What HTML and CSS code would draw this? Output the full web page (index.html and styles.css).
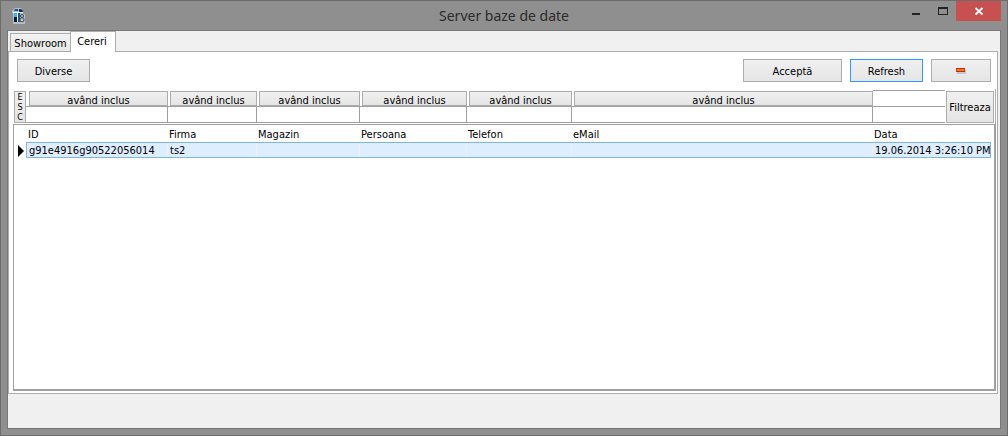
FILE: index.html
```html
<!DOCTYPE html>
<html lang="ro">
<head>
<meta charset="utf-8">
<title>Server baze de date</title>
<link rel="stylesheet" href="styles.css">
</head>
<body>
<div class="window">
  <header class="titlebar">
    <svg class="app-icon" viewBox="0 0 14 16" aria-hidden="true">
      <path d="M3 0h6l2 3v3h2v10H1V5H0V3z" fill="#b4c0c6"/>
      <path d="M3 1h3v2H2z" fill="#174f9c"/>
      <path d="M7 1h2l2 2v1H7z" fill="#0c2b58"/>
      <path d="M1 4h10v1H1z" fill="#f4fbff"/>
      <path d="M2 5h3v5H2z" fill="#3db4ea"/>
      <path d="M2 9h3v5H2z" fill="#06162e"/>
      <path d="M5 5h1v9H5z" fill="#eef6fa"/>
      <path d="M6 5h2v9H6z" fill="#1c5692"/>
      <circle cx="10" cy="8" r="1.500" fill="#c8cccf" stroke="#3c4246"/>
      <circle cx="10" cy="11.800" r="2" fill="#c8cccf" stroke="#3c4246"/>
    </svg>
    <h1 class="title">Server baze de date</h1>
    <div class="controls">
      <button class="control" aria-label="Minimize"><svg width="10" height="10" viewBox="0 0 10 10"><path d="M1 7h8v2H1z" fill="#222"/></svg></button>
      <button class="control" aria-label="Maximize"><svg width="10" height="10" viewBox="0 0 10 10"><path d="M0 1h10v8H0zM1 3v5h8V3z" fill="#222" fill-rule="evenodd"/></svg></button>
      <button class="control close" aria-label="Close"><svg width="10" height="10" viewBox="0 0 10 10"><path d="M1.500 2l7 6.500M8.500 2l-7 6.500" stroke="#fff" stroke-width="1.800"/></svg></button>
    </div>
  </header>
  <main class="client">
    <div class="tabs" role="tablist">
      <button class="tab" role="tab" aria-selected="false">Showroom</button>
      <button class="tab active" role="tab" aria-selected="true">Cereri</button>
    </div>
    <section class="panel" role="tabpanel">
      <div class="toolbar">
        <button class="btn">Diverse</button>
        <span class="spacer"></span>
        <button class="btn wide">Acceptă</button>
        <button class="btn focus">Refresh</button>
        <button class="btn remove" aria-label="Șterge"><svg width="12" height="6" viewBox="0 0 12 6"><path d="M2 2h9v4H2z" fill="#c9c9c9"/><path d="M1 0h9v4H1z" fill="#f07a2c"/><path d="M1 0h9v1H1zM1 3h9v1H1z" fill="#c62a08"/><path d="M1 1h1v2H1zM9 1h1v2H9z" fill="#d8401a"/></svg></button>
      </div>
      <form class="filters">
        <button class="esc" type="reset"><span>E</span><span>S</span><span>C</span></button>
        <div class="filter"><button type="button" class="mode">având inclus</button><input class="value" aria-label="ID"></div>
        <div class="filter"><button type="button" class="mode">având inclus</button><input class="value" aria-label="Firma"></div>
        <div class="filter"><button type="button" class="mode">având inclus</button><input class="value" aria-label="Magazin"></div>
        <div class="filter"><button type="button" class="mode">având inclus</button><input class="value" aria-label="Persoana"></div>
        <div class="filter"><button type="button" class="mode">având inclus</button><input class="value" aria-label="Telefon"></div>
        <div class="filter"><button type="button" class="mode">având inclus</button><input class="value" aria-label="eMail"></div>
        <div class="filter range"><input class="value" aria-label="Data de la"><input class="value" aria-label="Data până la"></div>
        <button class="apply" type="button">Filtreaza</button>
      </form>
      <div class="grid">
        <table class="records">
          <colgroup><col class="c-mark"><col class="c-id"><col class="c-firma"><col class="c-magazin"><col class="c-persoana"><col class="c-telefon"><col><col class="c-data"></colgroup>
          <thead><tr><td></td><th>ID</th><th>Firma</th><th>Magazin</th><th>Persoana</th><th>Telefon</th><th>eMail</th><th>Data</th></tr></thead>
          <tbody><tr><td class="mark"><svg width="6" height="12" viewBox="0 0 6 12"><path d="M0 0l6 6-6 6z" fill="#000"/></svg></td><td>g91e4916g90522056014</td><td>ts2</td><td></td><td></td><td></td><td></td><td class="date">19.06.2014 3:26:10 PM</td></tr></tbody>
        </table>
      </div>
    </section>
  </main>
</div>
</body>
</html>
```
FILE: styles.css
```css
* { box-sizing: border-box; }

body {
  margin: 0;
  font-family: "DejaVu Sans Condensed", "Noto Sans", sans-serif;
  font-size: 11px;
  line-height: 14px;
  color: #000;
}

button, input {
  margin: 0;
  padding: 0;
  font: inherit;
  color: inherit;
  border-radius: 0;
}

svg { display: block; }

.window {
  display: flex;
  flex-direction: column;
  min-height: 100vh;
  padding: 0 6px 6px;
  background: #8f8f8f;
  border: 1px solid #6d6d6d;
}

.titlebar {
  display: grid;
  grid-template-columns: 1fr auto 1fr;
  align-items: start;
  height: 29px;
}

.app-icon { width: 14px; height: 16px; margin: 7px 0 0 5px; }

.title {
  margin: 5px 0 0;
  font-family: "Noto Sans", "Open Sans", sans-serif;
  font-size: 14px;
  font-weight: 400;
  line-height: 20px;
  color: #2b2b2b;
}

.controls { display: flex; justify-content: flex-end; }

.control {
  display: flex;
  align-items: center;
  justify-content: center;
  width: 27px;
  height: 20px;
  border: 0;
  background: none;
}

.control.close { width: 45px; background: #c75050; }

.client {
  display: flex;
  flex: 1;
  flex-direction: column;
  padding: 0 2px 34px 0;
  background: #f0f0f0;
  border: 1px solid #777;
}

.tabs { display: flex; align-items: flex-end; padding-left: 2px; }

.tab {
  width: 60px;
  height: 18px;
  padding-top: 2px;
  background: linear-gradient(#f2f2f2, #e8e8e8);
  border: 1px solid #acacac;
  border-width: 1px 0 0 1px;
}

.tab.active {
  z-index: 1;
  width: 46px;
  height: 21px;
  margin-bottom: -1px;
  padding: 0 2px 0 0;
  background: #fff;
  border-width: 1px 1px 0;
}

.panel {
  display: flex;
  flex: 1;
  flex-direction: column;
  padding: 7px 1px 2px 4px;
  background: #fff;
  border: 1px solid #acacac;
}

.toolbar { display: flex; gap: 8px; padding: 0 5px 0 4px; }

.spacer { flex: 1; }

.btn, .esc, .mode, .apply {
  background: linear-gradient(#f0f0f0, #e5e5e5);
  border: 1px solid #acacac;
}

.btn { width: 73px; height: 23px; padding-top: 2px; }
.btn.wide { width: 99px; }
.btn.focus { border-color: #3399ff; }

.btn.remove {
  display: flex;
  align-items: center;
  justify-content: center;
  width: 60px;
  padding: 0;
}

.filters {
  display: grid;
  grid-template-columns: 12px 142px 89px 103px 107px 105px 1fr 72px 50px;
  margin-top: 7px;
  padding-left: 1px;
  border-right: 1px solid #acacac;
}

.esc {
  display: flex;
  flex-direction: column;
  align-items: center;
  justify-content: center;
  margin: 2px 0 1px;
  font-size: 9px;
  line-height: 10px;
}

.filter {
  display: flex;
  flex-direction: column;
  min-width: 0;
  padding-top: 2px;
}

.mode { height: 15px; margin-left: 2px; padding-top: 2px; line-height: 14px; }

.value {
  width: 100%;
  height: 17px;
  border: 1px solid #a0a0a0;
  border-left: 0;
  background: #fff;
}

.filter:nth-child(2) .mode { margin-left: 3px; }

.filter.range { padding-top: 1px; }
.range .value { border-right: 0; }
.range .value:first-child { height: 16px; border-bottom: 0; }

.apply { margin: 2px 1px 1px; padding-top: 1px; }

.grid {
  flex: 1;
  background: #fff;
  border: 1px solid #a0a0a0;
  border-width: 1px 2px 2px 1px;
}

.records {
  width: calc(100% - 3px);
  table-layout: fixed;
  border-collapse: separate;
  border-spacing: 0;
}

.c-mark { width: 13px; }
.c-id { width: 141px; }
.c-firma { width: 89px; }
.c-magazin { width: 103px; }
.c-persoana { width: 107px; }
.c-telefon { width: 105px; }
.c-data { width: 118px; }

.records th, .records td { padding: 0 1px; text-align: left; font-weight: 400; white-space: nowrap; }

.records thead th { height: 17px; padding-top: 3px; }

.records tbody td {
  height: 16px;
  padding-top: 1px;
  padding-left: 2px;
  line-height: 13px;
  background: #deeeff;
  border: solid #7eb4ea;
  border-width: 1px 0;
  box-shadow: inset -1px 0 #f0f0f0;
}

.records tbody .mark {
  padding-left: 4px;
  background: none;
  border: 0;
  box-shadow: inset -1px 0 #7eb4ea;
}

.records tbody .date {
  padding-right: 0;
  border-right-width: 1px;
  box-shadow: none;
  text-align: right;
}
```
